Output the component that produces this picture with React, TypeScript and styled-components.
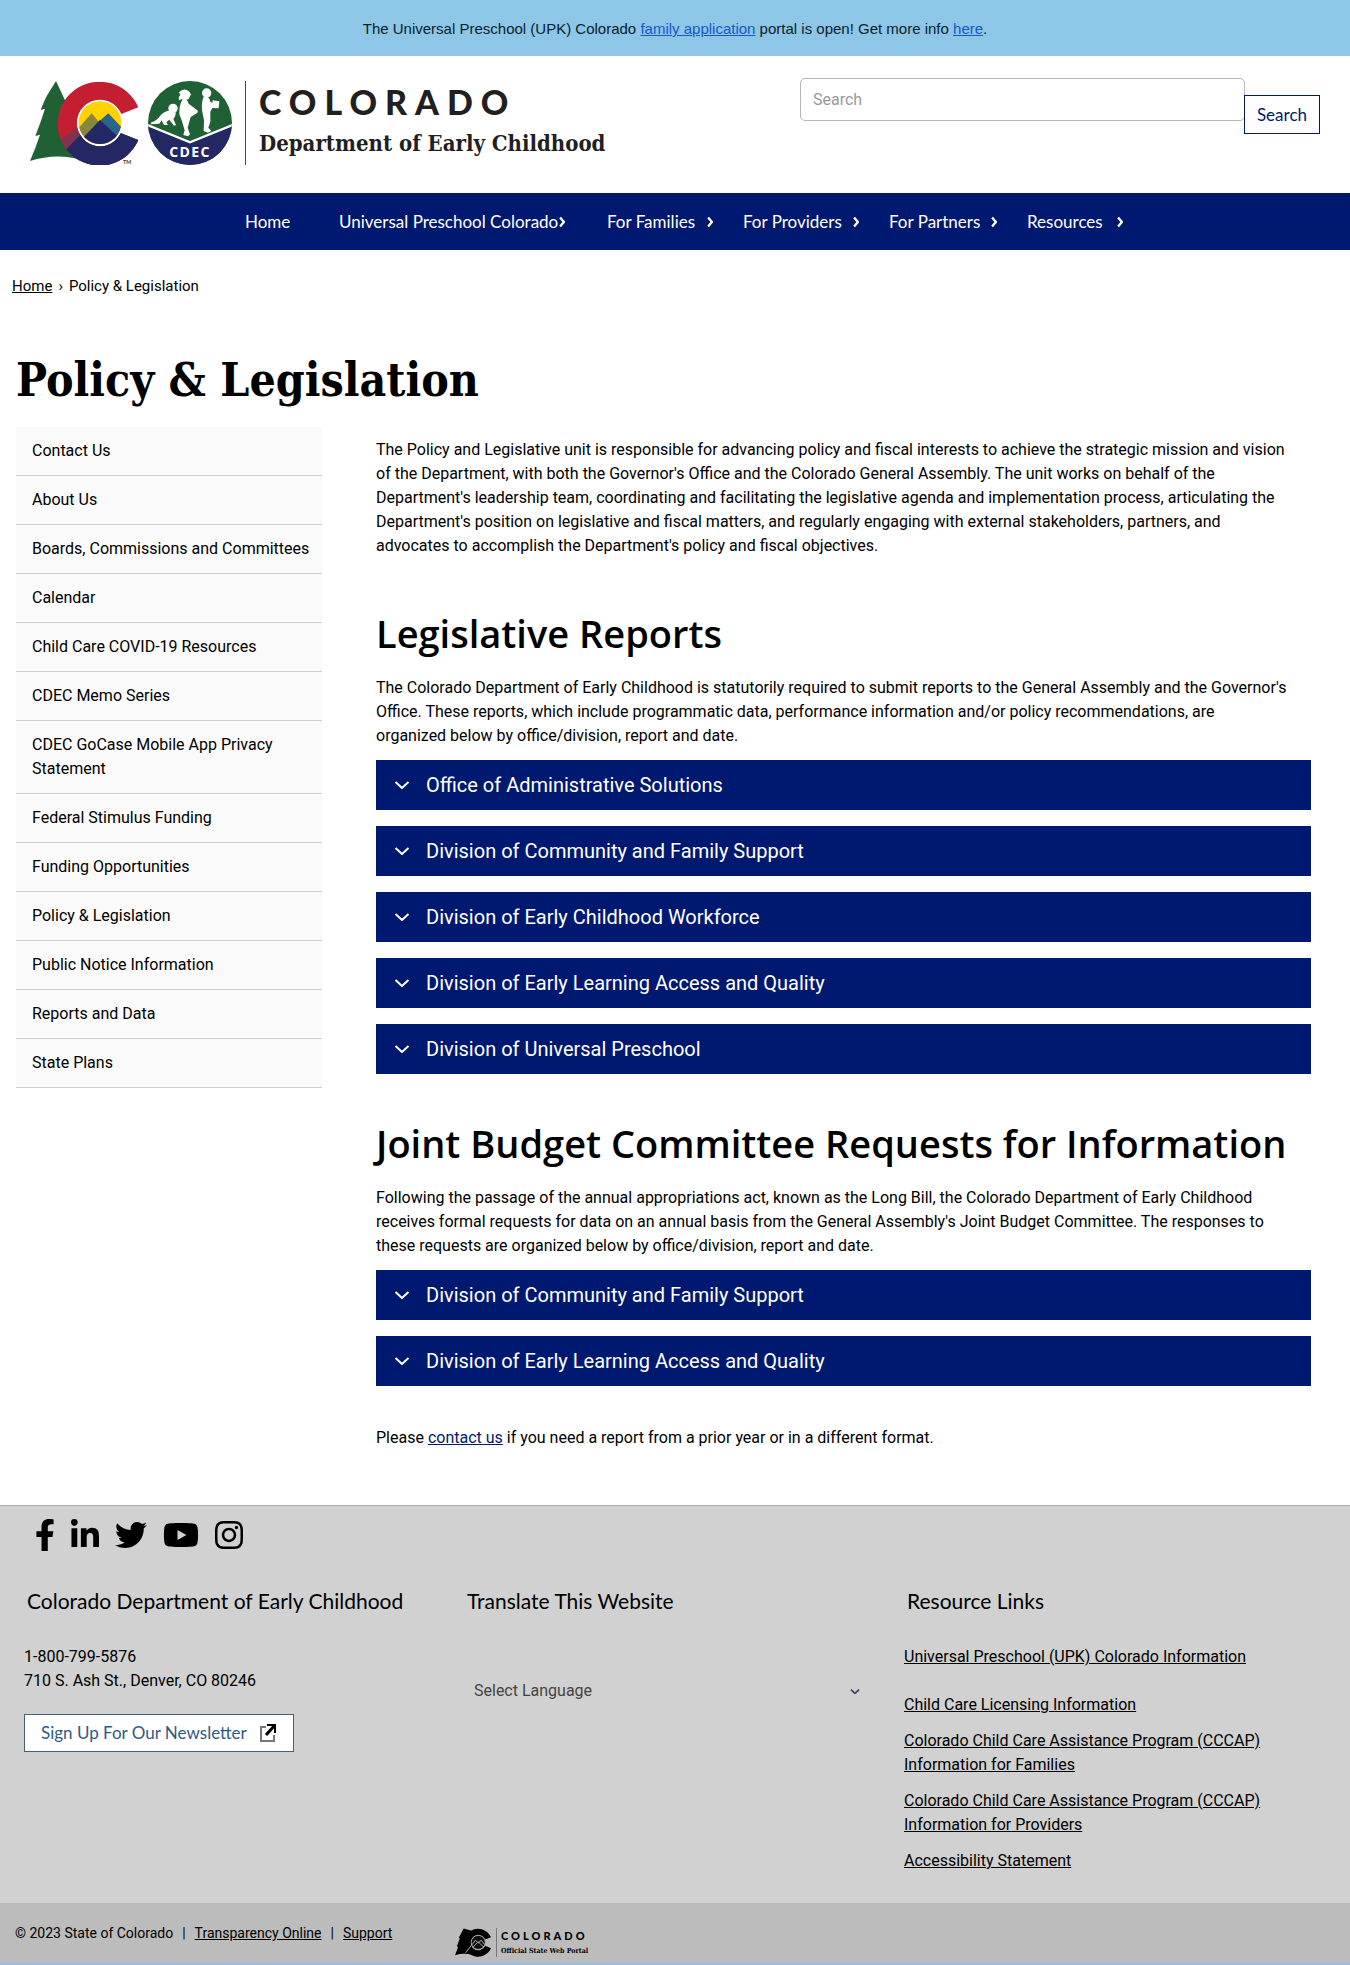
import React from "react";
import styled, { createGlobalStyle } from "styled-components";
import {
  FaFacebookF,
  FaInstagram,
  FaLinkedinIn,
  FaTwitter,
  FaYoutube,
} from "react-icons/fa";

const sans = `Roboto, "Liberation Sans", sans-serif`;
const display = `Lato, "Open Sans", sans-serif`;
const slab = `"DejaVu Serif Condensed", "DejaVu Serif", serif`;
const navy = "#001970";

const GlobalStyle = createGlobalStyle`
  *, *::before, *::after { box-sizing: border-box; }
  body { margin: 0; background: #fff; color: #000; font: 16px/24px ${sans}; }
  h1, h2, h3, p, ul { margin: 0; padding: 0; }
  ul { list-style: none; }
  a { color: inherit; }
`;

const Banner = styled.p`
  padding: 17px 16px 15px;
  background: #8dc6e6;
  color: #0a1e2c;
  font: 15px/24px "Liberation Sans", Arial, sans-serif;
  text-align: center;

  a {
    color: #1559c9;
  }
`;

const Header = styled.header`
  display: flex;
  justify-content: space-between;
  align-items: flex-start;
  padding: 22px 30px 28px;
`;

const Brand = styled.a`
  display: flex;
  padding-top: 3px;
  color: #231f20;
  text-decoration: none;
`;

const BrandText = styled.span`
  display: flex;
  flex-direction: column;
  margin-left: 12px;
  padding-left: 13px;
  border-left: 1px solid #4a4a4c;
`;

const BrandName = styled.span`
  font: 900 34px/42px ${display};
  letter-spacing: 8px;
`;

const BrandUnit = styled.span`
  font: 700 22px/40px ${slab};
`;

const SearchForm = styled.form`
  display: flex;
  flex: 0 1 520px;
  align-items: flex-start;
`;

const SearchInput = styled.input`
  flex: 1;
  min-width: 0;
  height: 43px;
  padding: 0 12px;
  border: 1px solid #b5b5b5;
  border-radius: 5px;
  background: #fff;
  font: 16px/24px ${sans};

  &::placeholder {
    color: #999;
  }
`;

const SearchButton = styled.button`
  height: 39px;
  margin: 17px 0 0 -1px;
  padding: 0 12px;
  border: 1px solid ${navy};
  background: #fff;
  color: ${navy};
  font: 17px/24px ${display};
`;

const Nav = styled.nav`
  background: ${navy};
`;

const NavList = styled.ul`
  display: flex;
  justify-content: center;
  gap: 30px;
  padding: 16px 0 16px 18px;
`;

const NavItem = styled.li<{ $width: number; $inset?: number }>`
  flex: 0 0 ${(p) => p.$width}px;
  padding-right: ${(p) => p.$inset ?? 0}px;
`;

const NavLink = styled.a`
  display: flex;
  justify-content: space-between;
  align-items: center;
  color: #fff;
  font: 17px/25px ${display};
  text-decoration: none;
  white-space: nowrap;

  svg {
    flex: none;
    margin-left: -2px;
  }
`;

const Breadcrumb = styled.nav`
  display: flex;
  gap: 6px;
  padding: 24px 12px 0;
  font-size: 15px;
`;

const PageTitle = styled.h1`
  padding: 54px 16px 19px;
  font: 700 46px/56px ${slab};
`;

const Content = styled.div`
  display: grid;
  grid-template-columns: 306px minmax(0, 1fr);
  gap: 54px;
  align-items: start;
  padding: 0 39px 55px 16px;
`;

const SideLink = styled.a`
  display: block;
  padding: 12px 8px 12px 16px;
  border-bottom: 1px solid #d0d0d0;
  background: #fafafa;
  text-decoration: none;
`;

const Main = styled.main`
  padding-top: 11px;
`;

const SectionTitle = styled.h2<{ $space: number }>`
  margin: ${(p) => p.$space}px 0 19px;
  font: 600 38px/48px "Open Sans", "Noto Sans", sans-serif;
`;

const Accordion = styled.div`
  display: flex;
  flex-direction: column;
  gap: 16px;
  margin-top: 12px;
`;

const AccordionButton = styled.button`
  display: flex;
  align-items: center;
  gap: 16px;
  height: 50px;
  padding: 0 18px;
  border: 0;
  background: ${navy};
  color: #fff;
  font: 20px/24px ${sans};
  text-align: left;
`;

const Closing = styled.p`
  margin-top: 40px;

  a {
    color: ${navy};
  }
`;

const Footer = styled.footer`
  border-top: 1px solid #adb1ad;
  background: #d1d1d1;
`;

const Social = styled.ul`
  display: flex;
  gap: 16px;
  padding: 13px 35px 0;
`;

const SocialLink = styled.a<{ $width: number }>`
  display: block;
  width: ${(p) => p.$width}px;
  color: #000;

  svg {
    display: block;
    width: 100%;
    height: 32px;
  }
`;

const FooterGrid = styled.div`
  display: grid;
  grid-template-columns: repeat(3, 1fr);
  padding: 35px 6px 30px 24px;
`;

const FooterTitle = styled.h3`
  padding: 0 3px 29px;
  font: 400 21px/30px ${display};
`;

const Newsletter = styled.a`
  display: inline-flex;
  align-items: center;
  gap: 12px;
  height: 38px;
  margin-top: 21px;
  padding: 0 16px;
  border: 1px solid #44607a;
  background: #fff;
  color: #2f5b82;
  font: 17px/24px ${display};
  text-decoration: none;
`;

const LanguageField = styled.div`
  position: relative;
  margin: 26px 44px 0 0;

  svg {
    position: absolute;
    top: 18px;
    right: 0;
    pointer-events: none;
  }
`;

const LanguageSelect = styled.select`
  width: 100%;
  height: 40px;
  padding: 0 20px 0 10px;
  border: 0;
  appearance: none;
  background: transparent;
  color: #444;
  font: 16px/24px ${sans};
`;

const ResourceList = styled.ul`
  display: flex;
  flex-direction: column;
  gap: 12px;

  li:first-child {
    margin-bottom: 12px;
  }
`;

const Legal = styled.div`
  display: grid;
  grid-template-columns: 440px 1fr;
  align-items: start;
  padding: 18px 15px 5px;
  border-bottom: 3px solid #9cbdd9;
  background: #bcbcbc;
`;

const LegalLinks = styled.p`
  display: flex;
  align-items: center;
  gap: 9px;
  font-size: 14px;
`;

const Portal = styled.a`
  display: flex;
  padding-top: 7px;
  text-decoration: none;
`;

const PortalText = styled.span`
  display: flex;
  flex-direction: column;
  margin-left: 5px;
  padding-left: 4px;
  border-left: 1px solid #777;
`;

const PortalName = styled.span`
  font: 900 11px/16px ${display};
  letter-spacing: 3px;
`;

const PortalUnit = styled.span`
  font: 700 7px/13px ${slab};
`;

const cShape =
  "M325 79 A126 126 0 1 0 325 177 L272 156 A68 68 0 1 1 272 100 Z";

/* The state emblem (tree and letter C) beside the round department seal. */
function StateLogo() {
  return (
    <svg width="203" height="84" viewBox="0 0 609 252" aria-hidden="true">
      <defs>
        <clipPath id="letterC">
          <path d={cShape} />
        </clipPath>
        <clipPath id="sun">
          <circle cx="210" cy="125" r="64" />
        </clipPath>
        <clipPath id="seal">
          <circle cx="480" cy="126" r="126" />
        </clipPath>
      </defs>
      <path
        fill="#1f6135"
        d="M78 0 L52 42 L44 58 L32 87 L45 83 L32 122 L16 165 L30 161 L16 201 L0 240 Q80 214 160 238 L120 90 Z"
      />
      <g clipPath="url(#letterC)">
        <rect width="340" height="252" fill="#c41f30" />
        <path fill="#7e3350" d="M84 182 L170 120 V165 L102 212 Z" />
        <path fill="#232865" d="M96 218 L160 152 L210 125 L340 150 V252 H96 Z" />
      </g>
      <circle cx="210" cy="125" r="69" fill="#fff" />
      <g clipPath="url(#sun)">
        <rect x="140" y="55" width="140" height="140" fill="#ffd200" />
        <path fill="#85883c" d="M140 148 L185 97 L225 145 L180 190 Z" />
        <path fill="#2a6589" d="M206 122 L235 97 L282 147 L260 180 Z" />
        <path fill="#232865" d="M140 190 L210 117 L276 178 L250 200 H150 Z" />
      </g>
      <text x="279" y="249" fontFamily="Lato, sans-serif" fontWeight="700" fontSize="16" fill="#333">
        TM
      </text>
      <g clipPath="url(#seal)">
        <rect x="350" width="260" height="252" fill="#1f6135" />
        <path fill="#232865" d="M350 130 L480 184 L610 130 V252 H350 Z" />
        <path fill="none" stroke="#fff" strokeWidth="7" d="M350 131 L480 184 L610 131" />
      </g>
      <g fill="#fff">
        <circle cx="429" cy="82" r="14" />
        <path d="M424 88 Q402 90 390 105 Q380 120 364 124 L362 130 L388 128 L395 118 L402 132 L414 132 L409 124 L418 116 L432 134 L438 132 L430 114 Q440 100 436 92 Z" />
        <circle cx="466" cy="43" r="14" />
        <path d="M447 34 Q463 18 478 32 L484 42 L474 46 L448 58 Q443 50 451 42 Z" />
        <path d="M458 54 Q472 52 476 68 L502 88 Q507 94 498 98 L482 108 L473 140 L480 160 L474 166 L460 162 L464 148 L455 118 L448 100 Q446 76 458 54 Z" />
        <circle cx="530" cy="36" r="14" />
        <path d="M521 48 Q538 44 541 62 L547 66 L548 58 L568 61 L566 82 L547 81 L541 92 L541 122 L535 140 L544 150 L534 155 L521 150 L522 118 L516 88 Q514 60 521 48 Z" />
      </g>
      <text
        x="480"
        y="227"
        textAnchor="middle"
        fontFamily="'Open Sans', sans-serif"
        fontWeight="700"
        fontSize="42"
        letterSpacing="4"
        fill="#fff"
      >
        CDEC
      </text>
    </svg>
  );
}

/* One-colour version of the emblem. */
function PortalLogo() {
  return (
    <svg width="36" height="29" viewBox="0 0 325 252" aria-hidden="true">
      <path
        fill="#000"
        d="M78 0 L32 87 L45 83 L16 165 L30 161 L0 240 Q80 214 160 238 L150 20 Z"
      />
      <path fill="#000" d={cShape} />
      <circle cx="210" cy="125" r="64" fill="#111" stroke="#bcbcbc" strokeWidth="8" />
      <path
        fill="none"
        stroke="#bcbcbc"
        strokeWidth="8"
        d="M96 218 L185 105 L210 132 L235 105 L268 145 M160 170 L210 120 L262 170"
      />
    </svg>
  );
}

type ChevronProps = { size: number; dir: "right" | "down"; color?: string };

function Chevron({ size, dir, color = "#fff" }: ChevronProps) {
  const down = dir === "down";
  return (
    <svg
      width={down ? size : size / 2}
      height={down ? size / 2 : size}
      viewBox={down ? "0 0 16 8" : "0 0 8 16"}
      aria-hidden="true"
    >
      <path
        d={down ? "M1.5 1 L8 7 L14.5 1" : "M1.5 2 L6.5 8 L1.5 14"}
        fill="none"
        stroke={color}
        strokeWidth={size > 12 ? 2 : 3}
      />
    </svg>
  );
}

function ExternalIcon() {
  return (
    <svg width="18" height="20" viewBox="0 0 18 20" fill="none" aria-hidden="true">
      <path d="M7 4 H2 V18 H15 V12" stroke="#777" strokeWidth="2" />
      <path d="M7 12 L16 2" stroke="#000" strokeWidth="3" />
      <path d="M8 2 H16 V10" stroke="#000" strokeWidth="2" />
    </svg>
  );
}

const navItems = [
  { label: "Home", width: 64, menu: false },
  { label: "Universal Preschool Colorado", width: 238, inset: 12, menu: true },
  { label: "For Families", width: 106, menu: true },
  { label: "For Providers", width: 116, menu: true },
  { label: "For Partners", width: 108, menu: true },
  { label: "Resources", width: 96, menu: true },
];

const sideItems = [
  "Contact Us",
  "About Us",
  "Boards, Commissions and Committees",
  "Calendar",
  "Child Care COVID-19 Resources",
  "CDEC Memo Series",
  "CDEC GoCase Mobile App Privacy Statement",
  "Federal Stimulus Funding",
  "Funding Opportunities",
  "Policy & Legislation",
  "Public Notice Information",
  "Reports and Data",
  "State Plans",
];

const reportOffices = [
  "Office of Administrative Solutions",
  "Division of Community and Family Support",
  "Division of Early Childhood Workforce",
  "Division of Early Learning Access and Quality",
  "Division of Universal Preschool",
];

const budgetOffices = [
  "Division of Community and Family Support",
  "Division of Early Learning Access and Quality",
];

const social = [
  { label: "Facebook", width: 20, Icon: FaFacebookF },
  { label: "LinkedIn", width: 28, Icon: FaLinkedinIn },
  { label: "Twitter", width: 32, Icon: FaTwitter },
  { label: "YouTube", width: 36, Icon: FaYoutube },
  { label: "Instagram", width: 28, Icon: FaInstagram },
];

const resources = [
  "Universal Preschool (UPK) Colorado Information",
  "Child Care Licensing Information",
  "Colorado Child Care Assistance Program (CCCAP) Information for Families",
  "Colorado Child Care Assistance Program (CCCAP) Information for Providers",
  "Accessibility Statement",
];

function OfficeAccordion({ items }: { items: string[] }) {
  return (
    <Accordion>
      {items.map((item) => (
        <AccordionButton key={item} type="button" aria-expanded={false}>
          <Chevron size={16} dir="down" />
          {item}
        </AccordionButton>
      ))}
    </Accordion>
  );
}

export default function App() {
  return (
    <>
      <GlobalStyle />
      <Banner>
        The Universal Preschool (UPK) Colorado <a href="#application">family application</a> portal
        is open! Get more info <a href="#info">here</a>.
      </Banner>

      <Header>
        <Brand href="#home">
          <StateLogo />
          <BrandText>
            <BrandName>COLORADO</BrandName>
            <BrandUnit>Department of Early Childhood</BrandUnit>
          </BrandText>
        </Brand>
        <SearchForm role="search">
          <SearchInput type="search" placeholder="Search" aria-label="Search" />
          <SearchButton type="submit">Search</SearchButton>
        </SearchForm>
      </Header>

      <Nav aria-label="Main">
        <NavList>
          {navItems.map((item) => (
            <NavItem key={item.label} $width={item.width} $inset={item.inset}>
              <NavLink href="#nav">
                {item.label}
                {item.menu && <Chevron size={12} dir="right" />}
              </NavLink>
            </NavItem>
          ))}
        </NavList>
      </Nav>

      <Breadcrumb aria-label="Breadcrumb">
        <a href="#home">Home</a>
        <span>›</span>
        <span>Policy &amp; Legislation</span>
      </Breadcrumb>

      <PageTitle>Policy &amp; Legislation</PageTitle>

      <Content>
        <nav aria-label="Section">
          <ul>
            {sideItems.map((item) => (
              <li key={item}>
                <SideLink href="#section">{item}</SideLink>
              </li>
            ))}
          </ul>
        </nav>

        <Main>
          <p>
            The Policy and Legislative unit is responsible for advancing policy and fiscal interests
            to achieve the strategic mission and vision
            <br />
            of the Department, with both the Governor's Office and the Colorado General Assembly. The
            unit works on behalf of the
            <br />
            Department's leadership team, coordinating and facilitating the legislative agenda and
            implementation process, articulating the
            <br />
            Department's position on legislative and fiscal matters, and regularly engaging with
            external stakeholders, partners, and
            <br />
            advocates to accomplish the Department's policy and fiscal objectives.
          </p>

          <SectionTitle $space={51}>Legislative Reports</SectionTitle>
          <p>
            The Colorado Department of Early Childhood is statutorily required to submit reports to
            the General Assembly and the Governor's
            <br />
            Office. These reports, which include programmatic data, performance information and/or
            policy recommendations, are
            <br />
            organized below by office/division, report and date.
          </p>
          <OfficeAccordion items={reportOffices} />

          <SectionTitle $space={45}>Joint Budget Committee Requests for Information</SectionTitle>
          <p>
            Following the passage of the annual appropriations act, known as the Long Bill, the
            Colorado Department of Early Childhood
            <br />
            receives formal requests for data on an annual basis from the General Assembly's Joint
            Budget Committee. The responses to
            <br />
            these requests are organized below by office/division, report and date.
          </p>
          <OfficeAccordion items={budgetOffices} />

          <Closing>
            Please <a href="#contact">contact us</a> if you need a report from a prior year or in a
            different format.
          </Closing>
        </Main>
      </Content>

      <Footer>
        <Social>
          {social.map(({ label, width, Icon }) => (
            <li key={label}>
              <SocialLink href="#social" aria-label={label} $width={width}>
                <Icon />
              </SocialLink>
            </li>
          ))}
        </Social>

        <FooterGrid>
          <section>
            <FooterTitle>Colorado Department of Early Childhood</FooterTitle>
            <p>
              1-800-799-5876
              <br />
              710 S. Ash St., Denver, CO 80246
            </p>
            <Newsletter href="#newsletter">
              Sign Up For Our Newsletter
              <ExternalIcon />
            </Newsletter>
          </section>
          <section>
            <FooterTitle>Translate This Website</FooterTitle>
            <LanguageField>
              <LanguageSelect aria-label="Language">
                <option>Select Language</option>
              </LanguageSelect>
              <Chevron size={10} dir="down" color="#444a66" />
            </LanguageField>
          </section>
          <section>
            <FooterTitle>Resource Links</FooterTitle>
            <ResourceList>
              {resources.map((item) => (
                <li key={item}>
                  <a href="#resource">{item}</a>
                </li>
              ))}
            </ResourceList>
          </section>
        </FooterGrid>

        <Legal>
          <LegalLinks>
            <span>© 2023 State of Colorado</span>
            <span>|</span>
            <a href="#transparency">Transparency Online</a>
            <span>|</span>
            <a href="#support">Support</a>
          </LegalLinks>
          <Portal href="#portal">
            <PortalLogo />
            <PortalText>
              <PortalName>COLORADO</PortalName>
              <PortalUnit>Official State Web Portal</PortalUnit>
            </PortalText>
          </Portal>
        </Legal>
      </Footer>
    </>
  );
}
